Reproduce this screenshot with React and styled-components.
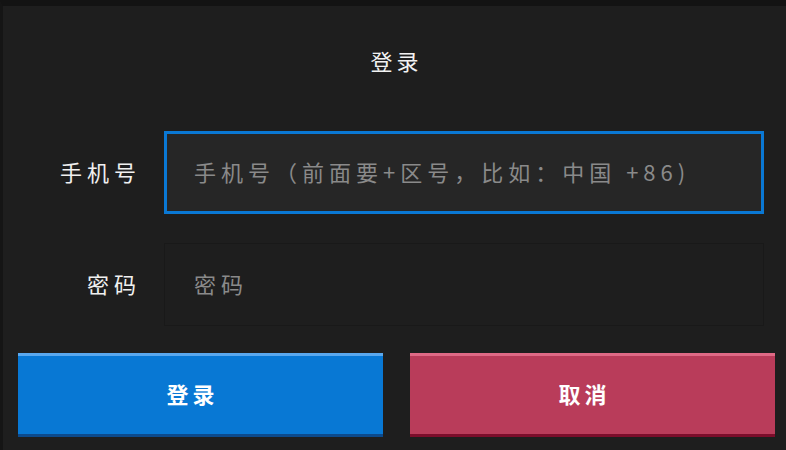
import React from 'react';
import styled, { createGlobalStyle } from 'styled-components';

const GlobalStyle = createGlobalStyle`
    html, body {
        margin: 0;
        padding: 0;
        background: #1e1e1e;
    }
    * {
        box-sizing: border-box;
    }
`;

const Frame = styled.div`
    width: 786px;
    height: 450px;
    border-top: 6px solid #131313;
    border-left: 3px solid #151515;
    background: #1e1e1e;
    font-family: 'Noto Sans CJK SC', 'Noto Sans', sans-serif;
    display: flex;
    flex-direction: column;
`;

const Title = styled.h1`
    margin: 40px 0 0;
    padding-left: 4px;
    height: 28px;
    line-height: 28px;
    font-size: 22px;
    font-weight: 400;
    letter-spacing: 4px;
    text-align: center;
    color: #f2f2f2;
`;

const Form = styled.div`
    margin-top: 57px;
    display: flex;
    flex-direction: column;
    gap: 29px;
`;

const Row = styled.div`
    display: flex;
    align-items: center;
    gap: 28px;
`;

const Label = styled.label`
    flex: 0 0 138px;
    margin-right: -5px;
    padding-bottom: 4px;
    text-align: right;
    font-size: 22px;
    letter-spacing: 5px;
    color: #f0f0f0;
`;

const Input = styled.input`
    width: 600px;
    height: 83px;
    padding: 0 27px 4px;
    font-family: inherit;
    font-size: 22px;
    letter-spacing: 5px;
    color: #e0e0e0;
    outline: none;
    background: ${p => (p.$focused ? '#262626' : '#1e1e1e')};
    border: ${p => (p.$focused ? '3px solid #0a78d4' : '1px solid #191919')};
    padding-left: ${p => (p.$focused ? '27px' : '29px')};

    &::placeholder {
        color: #8a8a8a;
    }
`;

const Actions = styled.div`
    margin-top: 27px;
    padding-left: 15px;
    display: flex;
    gap: 27px;
`;

const Button = styled.button`
    width: 365px;
    height: 84px;
    padding: 0 16px 4px 0;
    font-family: inherit;
    font-size: 22px;
    font-weight: 700;
    letter-spacing: 4px;
    color: #ffffff;
    border: none;
    border-top: 3px solid ${p => (p.$danger ? '#e06a86' : '#5aa8ee')};
    border-bottom: 3px solid ${p => (p.$danger ? '#7c0d2b' : '#0c4a8c')};
    background: ${p => (p.$danger ? '#b93c5a' : '#0878d4')};
    cursor: pointer;
`;

const App = () => (
    <Frame>
        <GlobalStyle />
        <Title>登录</Title>
        <Form>
            <Row>
                <Label>手机号</Label>
                <Input $focused placeholder="手机号（前面要+区号，比如：中国 +86)" />
            </Row>
            <Row>
                <Label>密码</Label>
                <Input type="password" placeholder="密码" />
            </Row>
        </Form>
        <Actions>
            <Button>登录</Button>
            <Button $danger>取消</Button>
        </Actions>
    </Frame>
);

export default App;
